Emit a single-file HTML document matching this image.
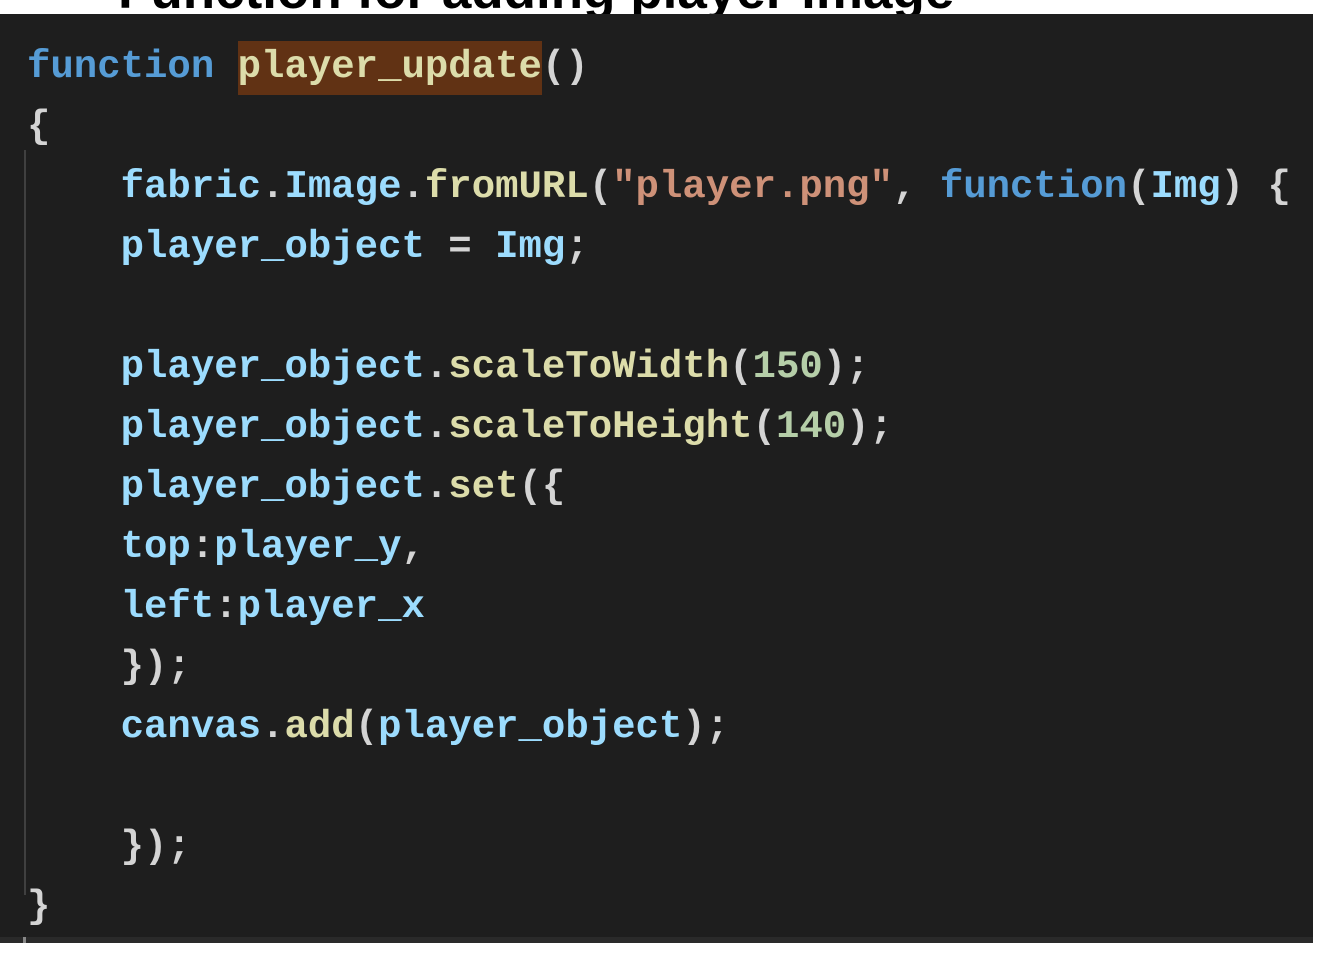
<!DOCTYPE html>
<html><head><meta charset="utf-8"><style>
html,body{margin:0;padding:0;background:#fff;width:1318px;height:965px;overflow:hidden;position:relative}
.title{position:absolute;left:118px;top:-36px;font:bold 53px "Liberation Sans",sans-serif;color:#000;white-space:nowrap;line-height:54px}
.box{position:absolute;left:0;top:14px;width:1313px;height:923px;background:#1e1e1e;overflow:hidden}
.sb{position:absolute;left:0;top:937px;width:1313px;height:6px;background:#2a2a2a}
.sb i{position:absolute;left:23px;top:0;width:3px;height:6px;background:#888}
.guide{position:absolute;left:24px;top:136px;width:2px;height:745px;background:#404040}
pre{margin:0;position:absolute;left:27px;top:23px;font:bold 39px "Liberation Mono",monospace;line-height:60px;color:#d4d4d4}
.k{color:#569cd6}.f{color:#dcdcaa}.v{color:#9cdcfe}.s{color:#ce9178}.n{color:#b5cea8}
.h{background:#613214;padding:4px 0 6px}
</style></head><body>
<div class="title">Function for adding player image</div>
<div class="box"><div class="guide"></div>
<pre><span class="k">function</span> <span class="f h">player_update</span>()
{
    <span class="v">fabric</span>.<span class="v">Image</span>.<span class="f">fromURL</span>(<span class="s">"player.png"</span>, <span class="k">function</span>(<span class="v">Img</span>) {
    <span class="v">player_object</span> = <span class="v">Img</span>;

    <span class="v">player_object</span>.<span class="f">scaleToWidth</span>(<span class="n">150</span>);
    <span class="v">player_object</span>.<span class="f">scaleToHeight</span>(<span class="n">140</span>);
    <span class="v">player_object</span>.<span class="f">set</span>({
    <span class="v">top</span>:<span class="v">player_y</span>,
    <span class="v">left</span>:<span class="v">player_x</span>
    });
    <span class="v">canvas</span>.<span class="f">add</span>(<span class="v">player_object</span>);

    });
}</pre></div>
<div class="sb"><i></i></div>
</body></html>
